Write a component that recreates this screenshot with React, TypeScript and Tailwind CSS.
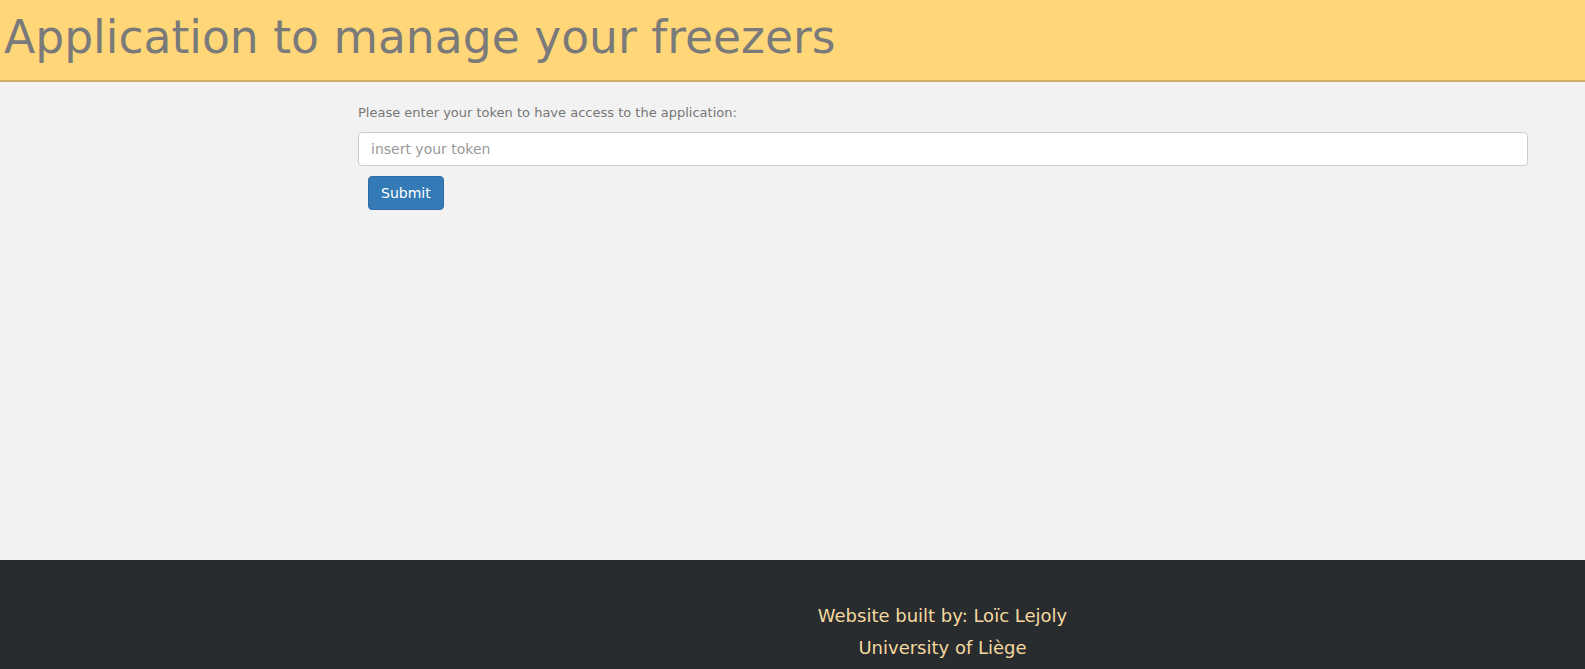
import React, { useState } from "react";

export default function App() {
  const [token, setToken] = useState("");

  return (
    <div className="min-h-screen flex flex-col bg-[#f2f2f2] font-['DejaVu_Sans',sans-serif]">
      {/* header */}
      <header className="h-[82px] bg-[#ffd778] border-b-2 border-[#d2b061] pl-[4px]">
        <h1 className="text-[45.6px] leading-[75px] text-[#7a7a7a] font-normal">
          Application to manage your freezers
        </h1>
      </header>

      {/* token form */}
      <main className="h-[478px] pl-[358px] pr-[57px] pt-[22px]">
        <label className="block text-[13px] leading-[18px] text-[#777]">
          Please enter your token to have access to the application:
        </label>
        <input
          value={token}
          onChange={(e) => setToken(e.target.value)}
          placeholder="insert your token"
          className="mt-[10px] block w-full h-[34px] px-3 text-[14px] text-[#555] bg-white border border-[#ccc] rounded-[4px] placeholder:text-[#999] outline-none"
        />
        <button className="mt-[10px] ml-[10px] h-[34px] px-3 text-[14px] text-white bg-[#337ab7] border border-[#2e6da4] rounded-[4px]">
          Submit
        </button>
      </main>

      {/* footer */}
      <footer className="flex-1 bg-[#292c2f] pt-[40px] pl-[300px] text-center text-[18px] leading-[32px] text-[#f5d9a0]">
        <p>Website built by: Loïc Lejoly</p>
        <p>University of Liège</p>
      </footer>
    </div>
  );
}
